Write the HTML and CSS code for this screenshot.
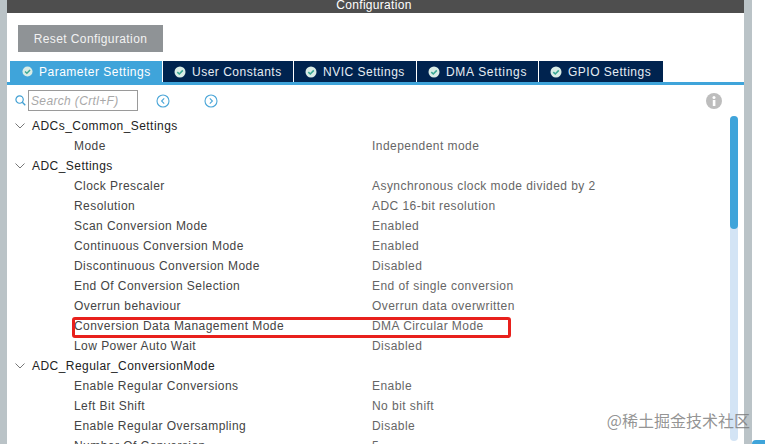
FILE: index.html
```html
<!DOCTYPE html>
<html lang="en">
<head>
    <meta charset="UTF-8">
    <title>Configuration</title>
    <link rel="stylesheet" href="styles.css">
</head>
<body>
    <div class="window">
        <div class="panel">
            <div class="title-bar">Configuration</div>
            <div class="toolbar">
                <button class="reset-btn">Reset Configuration</button>
            </div>
            <div class="tabs">
                <div class="tab tab-active tab-param"><svg class="tab-icon" viewBox="0 0 12 12"><circle cx="6" cy="6" r="5.5" fill="#d9ece6"/><path d="M3.3 6.1 5.3 8 8.8 4.4" fill="none" stroke="#3aa893" stroke-width="1.6"/></svg>Parameter Settings</div>
                <div class="tab tab-user"><svg class="tab-icon" viewBox="0 0 12 12"><circle cx="6" cy="6" r="5.5" fill="#d9ece6"/><path d="M3.3 6.1 5.3 8 8.8 4.4" fill="none" stroke="#3aa893" stroke-width="1.6"/></svg>User Constants</div>
                <div class="tab tab-nvic"><svg class="tab-icon" viewBox="0 0 12 12"><circle cx="6" cy="6" r="5.5" fill="#d9ece6"/><path d="M3.3 6.1 5.3 8 8.8 4.4" fill="none" stroke="#3aa893" stroke-width="1.6"/></svg>NVIC Settings</div>
                <div class="tab tab-dma"><svg class="tab-icon" viewBox="0 0 12 12"><circle cx="6" cy="6" r="5.5" fill="#d9ece6"/><path d="M3.3 6.1 5.3 8 8.8 4.4" fill="none" stroke="#3aa893" stroke-width="1.6"/></svg>DMA Settings</div>
                <div class="tab tab-gpio"><svg class="tab-icon" viewBox="0 0 12 12"><circle cx="6" cy="6" r="5.5" fill="#d9ece6"/><path d="M3.3 6.1 5.3 8 8.8 4.4" fill="none" stroke="#3aa893" stroke-width="1.6"/></svg>GPIO Settings</div>
            </div>
            <div class="search-row">
                <svg class="search-icon" viewBox="0 0 12 12"><circle cx="5" cy="5" r="4" fill="none" stroke="#3f9fd3" stroke-width="1.3"/><path d="M8 8 11.2 11.2" stroke="#3f9fd3" stroke-width="1.5"/></svg>
                <div class="search-box">Search (Crtl+F)</div>
                <svg class="nav-icon nav-prev" viewBox="0 0 14 14"><circle cx="7" cy="7" r="6" fill="none" stroke="#4ba6d8" stroke-width="1.1"/><path d="M8.2 4.4 5.6 7 8.2 9.6" fill="none" stroke="#4ba6d8" stroke-width="1.1"/></svg>
                <svg class="nav-icon nav-next" viewBox="0 0 14 14"><circle cx="7" cy="7" r="6" fill="none" stroke="#4ba6d8" stroke-width="1.1"/><path d="M5.8 4.4 8.4 7 5.8 9.6" fill="none" stroke="#4ba6d8" stroke-width="1.1"/></svg>
                <svg class="info-icon" viewBox="0 0 16 16"><circle cx="8" cy="8" r="8" fill="#bdbdbd"/><rect x="6.8" y="7" width="2.6" height="6" fill="#fff"/><circle cx="8" cy="4.5" r="1.5" fill="#fff"/></svg>
            </div>
            <div class="content">
                <div class="tree">
                    <div class="group"><svg class="caret" viewBox="0 0 10 6"><path d="M.5.5 5 5 9.500.5" fill="none" stroke="#777" stroke-width="1"/></svg>ADCs_Common_Settings</div>
                    <div class="row"><span class="name">Mode</span><span class="value">Independent mode</span></div>
                    <div class="group"><svg class="caret" viewBox="0 0 10 6"><path d="M.5.5 5 5 9.500.5" fill="none" stroke="#777" stroke-width="1"/></svg>ADC_Settings</div>
                    <div class="row"><span class="name">Clock Prescaler</span><span class="value">Asynchronous clock mode divided by 2</span></div>
                    <div class="row"><span class="name">Resolution</span><span class="value">ADC 16-bit resolution</span></div>
                    <div class="row"><span class="name">Scan Conversion Mode</span><span class="value">Enabled</span></div>
                    <div class="row"><span class="name">Continuous Conversion Mode</span><span class="value">Enabled</span></div>
                    <div class="row"><span class="name">Discontinuous Conversion Mode</span><span class="value">Disabled</span></div>
                    <div class="row"><span class="name">End Of Conversion Selection</span><span class="value">End of single conversion</span></div>
                    <div class="row"><span class="name">Overrun behaviour</span><span class="value">Overrun data overwritten</span></div>
                    <div class="row row-marked"><span class="name">Conversion Data Management Mode</span><span class="value">DMA Circular Mode</span><div class="red-box"></div></div>
                    <div class="row"><span class="name">Low Power Auto Wait</span><span class="value">Disabled</span></div>
                    <div class="group"><svg class="caret" viewBox="0 0 10 6"><path d="M.5.5 5 5 9.500.5" fill="none" stroke="#777" stroke-width="1"/></svg>ADC_Regular_ConversionMode</div>
                    <div class="row"><span class="name">Enable Regular Conversions</span><span class="value">Enable</span></div>
                    <div class="row"><span class="name">Left Bit Shift</span><span class="value">No bit shift</span></div>
                    <div class="row"><span class="name">Enable Regular Oversampling</span><span class="value">Disable</span></div>
                    <div class="row"><span class="name">Number Of Conversion</span><span class="value">5</span></div>
                </div>
                <div class="scrollbar"><div class="thumb"></div></div>
            </div>
        </div>
        <div class="side">
            <div class="corner"></div>
        </div>
    </div>
    <div class="watermark">@稀土掘金技术社区</div>
</body>
</html>
```

FILE: styles.css
```css
html, body {
    margin: 0;
    height: 100%;
    overflow: hidden;
}
body {
    font-family: "Liberation Sans", Arial, sans-serif;
    font-size: 12px;
    letter-spacing: 0.45px;
    background-color: white;
}
.window {
    display: flex;
    height: 444px;
    position: relative;
}
.panel {
    width: 737px;
    margin-left: 7px;
    border-right: 8px solid #bac3c7;
    box-shadow: -7px 0 0 #bac3c7;
    display: flex;
    flex-direction: column;
    overflow: hidden;
}
.title-bar {
    height: 13px;
    flex: none;
    background-color: #4e4e4e;
    color: white;
    text-align: center;
    line-height: 10px;
    letter-spacing: 0.3px;
    padding-right: 3px;
    overflow: hidden;
}
.toolbar {
    height: 48px;
    flex: none;
    padding: 12px 0 0 11px;
    box-sizing: border-box;
}
.reset-btn {
    display: block;
    width: 145px;
    height: 27px;
    background-color: #8f9396;
    color: #f2f2f2;
    border: none;
    padding: 0;
    font: inherit;
    letter-spacing: 0.4px;
}
.tabs {
    display: flex;
    flex: none;
    gap: 1px;
    height: 21px;
    padding-left: 3px;
    border-bottom: 3px solid #3fa4da;
}
.tab {
    display: flex;
    align-items: center;
    background-color: #00234f;
    color: #e6edf3;
    box-sizing: border-box;
    white-space: nowrap;
    letter-spacing: 0.5px;
}
.tab-active {
    background-color: #3fa4da;
    color: white;
}
.tab-param { width: 152px; padding-left: 12px; }
.tab-param .tab-icon { width: 11px; height: 11px; margin-right: 6px; }
.tab-user { width: 130px; padding-left: 11px; }
.tab-nvic { width: 122px; padding-left: 11px; }
.tab-dma { width: 121px; padding-left: 11px; letter-spacing: 0.7px; }
.tab-gpio { width: 124px; padding-left: 11px; }
.tab-icon {
    width: 12px;
    height: 12px;
    margin-right: 6px;
    flex: none;
}
.search-row {
    display: flex;
    align-items: center;
    height: 31px;
    flex: none;
    padding-left: 8px;
}
.search-icon {
    width: 11px;
    height: 11px;
    flex: none;
    margin-right: 2px;
}
.search-box {
    width: 110px;
    height: 21px;
    line-height: 21px;
    box-sizing: border-box;
    border: 1px solid #9a9a9a;
    padding-left: 2px;
    color: #a8a8a8;
    font-style: italic;
    white-space: nowrap;
    flex: none;
    letter-spacing: 0.35px;
}
.nav-icon {
    width: 14px;
    height: 14px;
    flex: none;
}
.nav-prev { margin-left: 18px; }
.nav-next { margin-left: 34px; }
.info-icon {
    width: 16px;
    height: 16px;
    flex: none;
    margin-left: 488px;
}
.content {
    flex: 1;
    display: flex;
    min-height: 0;
}
.tree {
    width: 723px;
    flex: none;
    height: 328px;
    overflow: hidden;
}
.group, .row {
    height: 20px;
    line-height: 20px;
    display: flex;
    align-items: center;
    white-space: nowrap;
}
.group {
    color: #222;
    padding-left: 8px;
    letter-spacing: 0.45px;
}
.caret {
    width: 10px;
    height: 6px;
    margin-right: 7px;
    flex: none;
}
.row {
    color: #444;
    padding-left: 67px;
}
.name {
    width: 298px;
    flex: none;
}
.value {
    color: #666;
}
.row-marked {
    position: relative;
}
.red-box {
    position: absolute;
    left: 65px;
    top: 1px;
    width: 433px;
    height: 15px;
    border: 3px solid #e8201c;
    border-radius: 3px;
}
.scrollbar {
    width: 8px;
    height: 325px;
    background-color: #d3e4f5;
    border-radius: 4px;
    flex: none;
}
.thumb {
    height: 113px;
    background-color: #3fa4da;
    border-radius: 4px;
}
.side {
    flex: 1;
    position: relative;
}
.corner {
    position: absolute;
    right: 0;
    bottom: 0;
    width: 13px;
    height: 4px;
    background-color: #3fa4da;
    border-top-left-radius: 6px;
}
.watermark {
    position: absolute;
    right: 15px;
    bottom: 12px;
    font-family: "Noto Sans CJK SC", sans-serif;
    font-size: 16px;
    letter-spacing: 0;
    color: rgba(120, 120, 120, 0.8);
}
```
